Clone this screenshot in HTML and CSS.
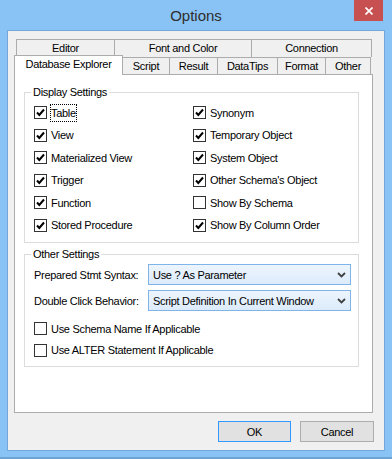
FILE: index.html
```html
<!DOCTYPE html>
<html lang="en">
<head>
    <meta charset="UTF-8">
    <title>Options</title>
    <link rel="stylesheet" href="styles.css">
</head>
<body>
<div class="window">
    <div class="titlebar">
        <span class="title">Options</span>
        <span class="close">
            <svg width="8" height="8" viewBox="0 0 8 8"><path d="M0.5 0.5 L7.5 7.5 M7.5 0.5 L0.5 7.5" stroke="#fff" stroke-width="1.7"/></svg>
        </span>
    </div>

    <div class="client">
        <div class="tabrow back">
            <div class="tab t-editor">Editor</div>
            <div class="tab t-font">Font and Color</div>
            <div class="tab t-conn">Connection</div>
        </div>
        <div class="tabrow front">
            <div class="tab t-db active">Database Explorer</div>
            <div class="tab t-script">Script</div>
            <div class="tab t-result">Result</div>
            <div class="tab t-tips">DataTips</div>
            <div class="tab t-format">Format</div>
            <div class="tab t-other">Other</div>
        </div>

        <div class="panel">
            <div class="group">
                <div class="legend">Display Settings</div>
                <div class="checks">
                    <div class="check"><span class="box on"><svg width="11" height="11" viewBox="0 0 11 11"><path d="M2 5.5 L4.3 8 L9 2.5" fill="none" stroke="#000" stroke-width="2"/></svg></span><span class="lbl focus">Table</span></div>
                    <div class="check"><span class="box on"><svg width="11" height="11" viewBox="0 0 11 11"><path d="M2 5.5 L4.3 8 L9 2.5" fill="none" stroke="#000" stroke-width="2"/></svg></span><span class="lbl">Synonym</span></div>
                    <div class="check"><span class="box on"><svg width="11" height="11" viewBox="0 0 11 11"><path d="M2 5.5 L4.3 8 L9 2.5" fill="none" stroke="#000" stroke-width="2"/></svg></span><span class="lbl">View</span></div>
                    <div class="check"><span class="box on"><svg width="11" height="11" viewBox="0 0 11 11"><path d="M2 5.5 L4.3 8 L9 2.5" fill="none" stroke="#000" stroke-width="2"/></svg></span><span class="lbl">Temporary Object</span></div>
                    <div class="check"><span class="box on"><svg width="11" height="11" viewBox="0 0 11 11"><path d="M2 5.5 L4.3 8 L9 2.5" fill="none" stroke="#000" stroke-width="2"/></svg></span><span class="lbl">Materialized View</span></div>
                    <div class="check"><span class="box on"><svg width="11" height="11" viewBox="0 0 11 11"><path d="M2 5.5 L4.3 8 L9 2.5" fill="none" stroke="#000" stroke-width="2"/></svg></span><span class="lbl">System Object</span></div>
                    <div class="check"><span class="box on"><svg width="11" height="11" viewBox="0 0 11 11"><path d="M2 5.5 L4.3 8 L9 2.5" fill="none" stroke="#000" stroke-width="2"/></svg></span><span class="lbl">Trigger</span></div>
                    <div class="check"><span class="box on"><svg width="11" height="11" viewBox="0 0 11 11"><path d="M2 5.5 L4.3 8 L9 2.5" fill="none" stroke="#000" stroke-width="2"/></svg></span><span class="lbl">Other Schema's Object</span></div>
                    <div class="check"><span class="box on"><svg width="11" height="11" viewBox="0 0 11 11"><path d="M2 5.5 L4.3 8 L9 2.5" fill="none" stroke="#000" stroke-width="2"/></svg></span><span class="lbl">Function</span></div>
                    <div class="check"><span class="box"></span><span class="lbl">Show By Schema</span></div>
                    <div class="check"><span class="box on"><svg width="11" height="11" viewBox="0 0 11 11"><path d="M2 5.5 L4.3 8 L9 2.5" fill="none" stroke="#000" stroke-width="2"/></svg></span><span class="lbl">Stored Procedure</span></div>
                    <div class="check"><span class="box on"><svg width="11" height="11" viewBox="0 0 11 11"><path d="M2 5.5 L4.3 8 L9 2.5" fill="none" stroke="#000" stroke-width="2"/></svg></span><span class="lbl">Show By Column Order</span></div>
                </div>
            </div>

            <div class="group other">
                <div class="legend">Other Settings</div>
                <div class="fields">
                    <span>Prepared Stmt Syntax:</span>
                    <div class="select"><span>Use ? As Parameter</span><svg width="9" height="6" viewBox="0 0 9 6"><path d="M1 1 L4.5 4.5 L8 1" fill="none" stroke="#404040" stroke-width="1.8"/></svg></div>
                    <span>Double Click Behavior:</span>
                    <div class="select"><span>Script Definition In Current Window</span><svg width="9" height="6" viewBox="0 0 9 6"><path d="M1 1 L4.5 4.5 L8 1" fill="none" stroke="#404040" stroke-width="1.8"/></svg></div>
                </div>
                <div class="checks single">
                    <div class="check"><span class="box"></span><span class="lbl">Use Schema Name If Applicable</span></div>
                    <div class="check"><span class="box"></span><span class="lbl">Use ALTER Statement If Applicable</span></div>
                </div>
            </div>
        </div>

        <div class="buttons">
            <button class="btn ok">OK</button>
            <button class="btn cancel">Cancel</button>
        </div>
    </div>
</div>
</body>
</html>
```

FILE: styles.css
```css
body {
    margin: 0;
    background-color: #89c3f5;
    font-family: "Liberation Sans", Arial, sans-serif;
    font-size: 11px;
    letter-spacing: -0.3px;
    color: #000;
}
.window {
    width: 392px;
    height: 459px;
    box-sizing: border-box;
    background-color: #89c3f5;
    border-bottom: 2px solid #6fa3d6;
}
.titlebar {
    height: 30px;
    display: grid;
    grid-template-columns: 1fr auto 1fr;
    align-items: start;
}
.title {
    grid-column: 2;
    margin-top: 7px;
    font-size: 15px;
    line-height: 17px;
    letter-spacing: 0;
    color: #2e2e2e;
}
.close {
    grid-column: 3;
    justify-self: end;
    width: 29px;
    height: 21px;
    margin-right: 9px;
    background-color: #c75050;
    display: flex;
    align-items: center;
    justify-content: center;
}
.close svg {
    display: block;
}
.client {
    margin-left: 7px;
    width: 378px;
    height: 421px;
    box-sizing: border-box;
    border: 1px solid #74a8dc;
    background-color: #f0f0f0;
    padding: 8px 0 0 6px;
}

/* tabs */
.tabrow {
    display: flex;
}
.tabrow.back {
    margin-left: 2px;
}
.tab {
    box-sizing: border-box;
    height: 18px;
    margin-left: -1px;
    border: 1px solid #acacac;
    border-bottom: none;
    background-color: #f0f0f0;
    text-align: center;
    line-height: 16px;
    white-space: nowrap;
}
.tab:first-child {
    margin-left: 0;
}
.tabrow.front {
    height: 19px;
    margin-top: -2px;
    align-items: flex-end;
}
.front .tab {
    height: 17px;
}
.front .tab.active {
    height: 20px;
    margin-bottom: -1px;
    line-height: 17px;
    background-color: #fff;
    position: relative;
    z-index: 1;
}
.t-editor { width: 99px; }
.t-font { width: 138px; }
.t-conn { width: 121px; }
.t-db { width: 109px; }
.t-script { width: 48px; }
.t-result { width: 49px; }
.t-tips { width: 61px; }
.t-format { width: 49px; }
.t-other { width: 46px; }

.panel {
    width: 359px;
    height: 339px;
    box-sizing: border-box;
    border: 1px solid #acacac;
    background-color: #fff;
    padding: 17px 0 0 9px;
}

/* group boxes */
.group {
    width: 335px;
    box-sizing: border-box;
    border: 1px solid #dcdcdc;
}
.group.other {
    margin-top: 11px;
}
.legend {
    display: table;
    margin: -8px 0 0 6px;
    padding: 0 2px;
    background-color: #fff;
    line-height: 14px;
}
.checks {
    display: grid;
    grid-template-columns: 159px 1fr;
    grid-auto-rows: 22.5px;
    align-items: center;
    padding: 2.5px 0 5px 9px;
}
.checks.single {
    grid-template-columns: 1fr;
    grid-auto-rows: 21.5px;
    padding-top: 7px;
}
.check {
    display: flex;
    align-items: center;
}
.box {
    width: 13px;
    height: 13px;
    box-sizing: border-box;
    border: 1px solid #333;
    background-color: #fff;
    flex: none;
}
.box svg {
    display: block;
}
.lbl {
    margin-left: 3px;
    border: 1px solid transparent;
    line-height: 16px;
    white-space: nowrap;
}
.lbl.focus {
    border: 1px dotted #000;
}

/* combo boxes */
.fields {
    display: grid;
    grid-template-columns: 114px 203px;
    grid-auto-rows: 21px;
    row-gap: 5px;
    align-items: center;
    padding: 3.5px 0 0 9px;
}
.select {
    height: 21px;
    box-sizing: border-box;
    border: 1px solid #7eb4ea;
    background: linear-gradient(#edf5fd, #dcebfc);
    display: flex;
    align-items: center;
    justify-content: space-between;
    padding: 0 4px 0 4px;
    white-space: nowrap;
}
.select svg {
    display: block;
}

/* dialog buttons */
.buttons {
    display: flex;
    justify-content: flex-end;
    gap: 9px;
    margin-top: 8px;
    padding-right: 10px;
}
.btn {
    height: 21px;
    padding: 0;
    border: 1px solid #adadad;
    background-color: #e1e1e1;
    font-family: inherit;
    font-size: 11px;
    letter-spacing: -0.3px;
    color: #000;
}
.btn.ok {
    width: 73px;
    border-color: #3399ff;
}
.btn.cancel {
    width: 74px;
}
```
